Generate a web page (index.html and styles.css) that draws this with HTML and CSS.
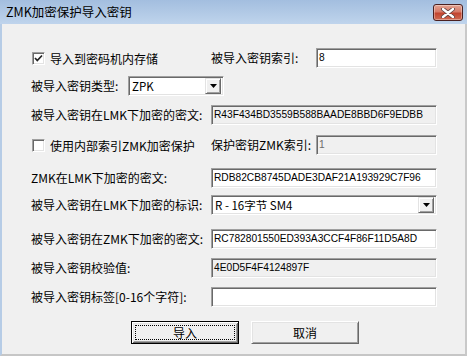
FILE: index.html
```html
<!DOCTYPE html>
<html>
<head>
<meta charset="utf-8">
<link rel="stylesheet" href="styles.css">
</head>
<body>
<div class="window">
  <div class="titlebar">
    <span class="title">ZMK加密保护导入密钥</span>
    <span class="close"><svg width="16" height="10" viewBox="0 0 16 10"><path d="M3 1 L13 9 M13 1 L3 9" stroke="#5a4040" stroke-width="4" stroke-linecap="round"/><path d="M3 1 L13 9 M13 1 L3 9" stroke="#fff" stroke-width="2.4" stroke-linecap="round"/></svg></span>
  </div>
  <div class="body">
    <div class="form">
      <div class="check c1"><span class="box"><svg width="11" height="11" viewBox="0 0 11 11"><path d="M2 5 L4.3 7.5 L9 2.5" stroke="#222" stroke-width="1.7" fill="none"/></svg></span><span>导入到密码机内存储</span></div>
      <div class="lbl c2">被导入密钥索引:</div>
      <div class="field c3">8</div>

      <div class="pair c12"><span class="lbl w97">被导入密钥类型:</span><div class="select small"><span class="val">ZPK</span><span class="arrow"><svg width="7" height="4" viewBox="0 0 7 4"><path d="M0 0 H7 L3.5 4 Z" fill="#000"/></svg></span></div></div>

      <div class="lbl c12">被导入密钥在LMK下加密的密文:</div>
      <div class="field ro c23">R43F434BD3559B588BAADE8BBD6F9EDBB</div>

      <div class="check c1"><span class="box"></span><span>使用内部索引ZMK加密保护</span></div>
      <div class="lbl c2">保护密钥ZMK索引:</div>
      <div class="field ro dis c3">1</div>

      <div class="lbl c12">ZMK在LMK下加密的密文:</div>
      <div class="field c23">RDB82CB8745DADE3DAF21A193929C7F96</div>

      <div class="lbl c12">被导入密钥在LMK下加密的标识:</div>
      <div class="select c23"><span class="val">R - 16字节 SM4</span><span class="arrow"><svg width="7" height="4" viewBox="0 0 7 4"><path d="M0 0 H7 L3.5 4 Z" fill="#000"/></svg></span></div>

      <div class="lbl c12">被导入密钥在ZMK下加密的密文:</div>
      <div class="field c23">RC782801550ED393A3CCF4F86F11D5A8D</div>

      <div class="lbl c12">被导入密钥校验值:</div>
      <div class="field ro c23">4E0D5F4F4124897F</div>

      <div class="lbl c12">被导入密钥标签[0-16个字符]:</div>
      <div class="field c23"></div>
    </div>
    <div class="buttons">
      <div class="btn default"><span class="focus">导入</span></div>
      <div class="btn">取消</div>
    </div>
  </div>
</div>
</body>
</html>
```
FILE: styles.css
```css
html, body { margin: 0; padding: 0; }
body { background: #f0f0f0; font-family: "Noto Sans CJK SC", "Liberation Sans", sans-serif; font-size: 12px; color: #000; }
.window { width: 467px; height: 356px; box-sizing: border-box; background: #f0f0f0; border-left: 2px solid #b6cce6; border-right: 2px solid #c9c9c9; border-bottom: 2px solid #c6c6c6; display: flex; flex-direction: column; }
.titlebar { height: 24px; margin: 0 -2px 0 -2px; background: linear-gradient(#a3bedf, #bfd4ec); display: flex; align-items: center; justify-content: space-between; padding: 0 4px 0 6px; box-sizing: border-box; }
.title { font-size: 12.5px; line-height: 24px; color: #000; }
.close { width: 30px; height: 17px; box-sizing: border-box; border: 1px solid #4a2020; border-radius: 3px; background: linear-gradient(#e3a493 0%, #d67a68 45%, #c2442f 55%, #cf6a52 100%); display: flex; align-items: center; justify-content: center; margin-top: 1px; box-shadow: inset 0 0 0 1px rgba(255,255,255,0.35); }
.body { flex: 1; padding: 24px 0 0 29px; }
.form { display: grid; grid-template-columns: 180px 105px 121px; grid-template-rows: 28px 29px 30px 33px 27px 34px 29px 29px 34px; align-items: start; }
.c1 { grid-column: 1; }
.c2 { grid-column: 2; }
.c3 { grid-column: 3; }
.c12 { grid-column: 1 / 3; }
.c23 { grid-column: 2 / 4; }
.lbl { height: 20px; line-height: 20px; white-space: nowrap; }
.c12.lbl { grid-column: 1; }
.pair { display: flex; align-items: center; }
.w97 { width: 97px; flex: none; }
.check { display: flex; align-items: center; height: 20px; gap: 5px; padding-left: 1px; white-space: nowrap; }
.box { width: 13px; height: 13px; box-sizing: border-box; background: #fff; border: 1px solid; border-color: #a0a0a0 #fff #fff #a0a0a0; box-shadow: inset 1px 1px 0 #696969, inset -1px -1px 0 #e3e3e3; display: flex; align-items: center; justify-content: center; }
.field { height: 20px; box-sizing: border-box; background: #fff; border: 1px solid; border-color: #a0a0a0 #fff #fff #a0a0a0; box-shadow: inset 1px 1px 0 #696969, inset -1px -1px 0 #e3e3e3; font-family: "Liberation Sans", sans-serif; font-size: 10.2px; line-height: 18px; padding-left: 2px; white-space: nowrap; overflow: hidden; }
.field.ro { background: #f0f0f0; }
.field.dis { color: #6d6d6d; }
.select { height: 20px; box-sizing: border-box; background: #fff; border: 1px solid; border-color: #a0a0a0 #fff #fff #a0a0a0; box-shadow: inset 1px 1px 0 #696969, inset -1px -1px 0 #e3e3e3; display: flex; align-items: center; justify-content: space-between; padding: 2px; }
.select.small { width: 96px; }
.select .val { font-family: "Noto Sans CJK SC", sans-serif; font-size: 11.5px; padding-left: 1px; white-space: nowrap; }
.arrow { width: 16px; height: 16px; box-sizing: border-box; background: #f0f0f0; border: 1px solid; border-color: #e3e3e3 #696969 #696969 #e3e3e3; box-shadow: inset 1px 1px 0 #fff, inset -1px -1px 0 #a0a0a0; display: flex; align-items: center; justify-content: center; }
.buttons { display: flex; gap: 12px; padding-left: 100px; margin-top: 0px; }
.btn { width: 108px; height: 23px; box-sizing: border-box; background: #f0f0f0; border: 1px solid; border-color: #fff #696969 #696969 #fff; box-shadow: inset 1px 1px 0 #e3e3e3, inset -1px -1px 0 #a0a0a0; display: flex; align-items: center; justify-content: center; font-size: 12px; }
.btn.default { border: 1px solid #000; box-shadow: inset 1px 1px 0 #fff, inset -1px -1px 0 #696969, inset 2px 2px 0 #e3e3e3, inset -2px -2px 0 #a0a0a0; padding: 3px; }
.focus { flex: 1; align-self: stretch; border: 1px dotted #000; display: flex; align-items: center; justify-content: center; }
```
